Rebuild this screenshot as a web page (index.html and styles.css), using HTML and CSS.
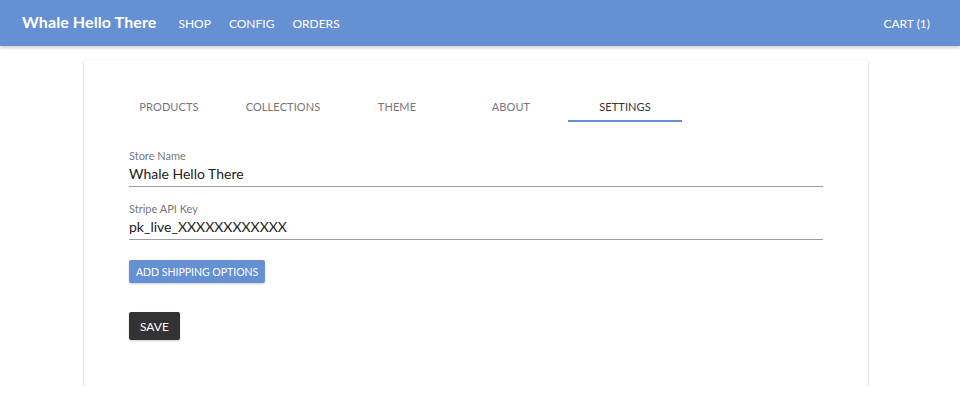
FILE: index.html
```html
<!DOCTYPE html>
<html lang="en">
<head>
  <meta charset="UTF-8">
  <meta name="viewport" content="width=device-width, initial-scale=1.0">
  <title>Whale Hello There - Settings</title>
  <link rel="stylesheet" href="styles.css">
</head>
<body>
  <nav class="topbar">
    <div class="brand">Whale Hello There</div>
    <ul class="nav-links">
      <li>SHOP</li>
      <li>CONFIG</li>
      <li>ORDERS</li>
    </ul>
    <div class="cart">CART (1)</div>
  </nav>

  <div class="card">
    <ul class="tabs">
      <li class="tab">PRODUCTS</li>
      <li class="tab">COLLECTIONS</li>
      <li class="tab">THEME</li>
      <li class="tab">ABOUT</li>
      <li class="tab active">SETTINGS</li>
    </ul>

    <form class="settings">
      <div class="field">
        <label for="storeName">Store Name</label>
        <input type="text" id="storeName" value="Whale Hello There">
      </div>
      <div class="field">
        <label for="stripeKey">Stripe API Key</label>
        <input type="text" id="stripeKey" value="pk_live_XXXXXXXXXXXX">
      </div>
      <div class="actions">
        <button type="button" class="btn btn-blue">ADD SHIPPING OPTIONS</button>
        <button type="button" class="btn btn-dark">SAVE</button>
      </div>
    </form>
  </div>
</body>
</html>
```

FILE: styles.css
```css
body {
  font-family: Lato, "Open Sans", sans-serif;
  background-color: #fff;
  margin: 0;
  color: #333;
}
.topbar {
  display: flex;
  align-items: center;
  height: 46px;
  padding: 0 30px 0 22px;
  background-color: #6690d4;
  color: #fff;
  box-shadow: 0 2px 3px rgba(0, 0, 0, 0.18);
}
.brand {
  font-size: 16px;
  font-weight: bold;
  letter-spacing: 0.1px;
  margin-top: -3px;
}
.nav-links {
  display: flex;
  gap: 18px;
  list-style: none;
  margin: 0 0 0 22px;
  padding: 0;
  font-size: 12px;
}
.cart {
  margin-left: auto;
  font-size: 12px;
}
.card {
  width: 784px;
  margin: 14px 0 0 84px;
  height: 326px;
  box-sizing: border-box;
  background: #fff;
  border-radius: 2px;
  box-shadow: 0 1px 3px rgba(0, 0, 0, 0.2), 0 0 1px rgba(0, 0, 0, 0.1);
  padding: 33px 45px 0;
}
.tabs {
  display: flex;
  list-style: none;
  margin: 0 0 0 -17px;
  padding: 0;
  height: 29px;
}
.tab {
  width: 114px;
  text-align: center;
  font-size: 11px;
  letter-spacing: 0.1px;
  color: #777;
  line-height: 28px;
}
.tab.active {
  color: #333;
  border-bottom: 2px solid #6690d4;
}
.settings {
  margin-top: 27px;
}
.field {
  display: flex;
  flex-direction: column;
  margin-bottom: 15px;
}
.field label {
  font-size: 11px;
  color: #777;
  line-height: 14px;
}
.field input {
  border: none;
  border-bottom: 1px solid #9e9e9e;
  padding: 2px 0 4px;
  font-family: inherit;
  font-size: 14px;
  color: #222;
  outline: none;
}
.actions {
  display: flex;
  flex-direction: column;
  align-items: flex-start;
  gap: 29px;
  margin-top: 20px;
}
.btn {
  border: none;
  border-radius: 2px;
  color: #fff;
  font-family: inherit;
  cursor: pointer;
  box-shadow: 0 1px 2px rgba(0, 0, 0, 0.2);
}
.btn-blue {
  background-color: #6690d4;
  font-size: 10.5px;
  height: 23px;
  padding: 0 7px;
}
.btn-dark {
  background-color: #333;
  font-size: 12px;
  height: 28px;
  padding: 0 11px;
}
```
